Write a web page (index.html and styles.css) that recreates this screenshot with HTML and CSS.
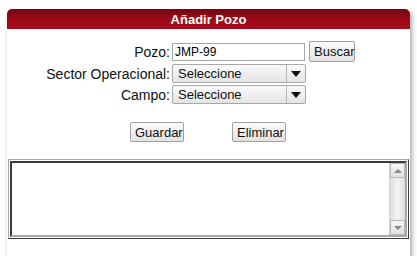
FILE: index.html
```html
<!DOCTYPE html>
<html lang="es">
<head>
    <title>Añadir Pozo</title>
    <meta charset="UTF-8">
    <link rel="stylesheet" href="styles.css">
</head>
<body>
    <div class="panel">
        <div class="panel-head">Añadir Pozo</div>
        <div class="panel-body">
            <div class="form-grid">
                <label class="lbl">Pozo:</label>
                <div class="field">
                    <input class="txt" type="text" value="JMP-99">
                    <button class="btn btn-buscar">Buscar</button>
                </div>
                <label class="lbl">Sector Operacional:</label>
                <div class="field">
                    <div class="sel"><span class="sel-text">Seleccione</span><span class="sel-arrow"></span></div>
                </div>
                <label class="lbl">Campo:</label>
                <div class="field">
                    <div class="sel"><span class="sel-text">Seleccione</span><span class="sel-arrow"></span></div>
                </div>
            </div>
            <div class="actions">
                <button class="btn">Guardar</button>
                <button class="btn">Eliminar</button>
            </div>
            <div class="frame">
                <div class="area">
                    <div class="area-text"></div>
                    <div class="scroll">
                        <div class="sb-btn"><span class="up"></span></div>
                        <div class="sb-track"></div>
                        <div class="sb-btn"><span class="down"></span></div>
                    </div>
                </div>
            </div>
        </div>
    </div>
</body>
</html>
```

FILE: styles.css
```css
body {
    margin: 0;
    background: #ffffff;
    font-family: "Liberation Sans", Arial, sans-serif;
}

.panel {
    margin: 9px 7px 0 7px;
    width: 403px;
    box-shadow: 2px 4px 5px rgba(0, 0, 0, 0.35);
}

.panel-head {
    height: 20px;
    line-height: 21px;
    border-radius: 5px 5px 0 0;
    background: linear-gradient(#6e0812, #9e0a18 50%, #a80b1b);
    color: #ffffff;
    font-weight: bold;
    font-size: 13px;
    text-align: center;
}

.panel-body {
    background: #ffffff;
    padding: 12px 1px 17px 1px;
}

.form-grid {
    display: grid;
    grid-template-columns: 128px auto;
    column-gap: 2px;
    row-gap: 2px;
    padding-left: 34px;
    align-items: center;
}

.lbl {
    text-align: right;
    font-size: 14px;
    color: #111111;
}

.field {
    display: flex;
    align-items: center;
}

.txt {
    box-sizing: border-box;
    width: 133px;
    height: 18px;
    margin: 0;
    padding: 0 2px;
    border: 1px solid #a8a8a8;
    font-family: "Liberation Sans", Arial, sans-serif;
    font-size: 12px;
    color: #000000;
    background: #ffffff;
}

.btn {
    box-sizing: border-box;
    height: 20px;
    padding: 0 4px;
    border: 1px solid #a0a0a0;
    border-radius: 2px;
    background: linear-gradient(#fbfbfb, #e2e2e2);
    font-family: "Liberation Sans", Arial, sans-serif;
    font-size: 13px;
    color: #111111;
}

.btn-buscar {
    margin-left: 4px;
    width: 46px;
    height: 21px;
}

.sel {
    box-sizing: border-box;
    width: 134px;
    height: 19px;
    display: flex;
    border: 1px solid #a8a8a8;
    border-radius: 2px;
    background: linear-gradient(#fafafa, #e4e4e4);
    font-size: 13px;
    color: #111111;
}

.sel-text {
    flex: 1;
    padding-left: 5px;
    line-height: 17px;
    border-right: 1px solid #b8b8b8;
}

.sel-arrow {
    width: 18px;
    position: relative;
}

.sel-arrow::after {
    content: "";
    position: absolute;
    left: 4px;
    top: 6px;
    border-left: 5px solid transparent;
    border-right: 5px solid transparent;
    border-top: 6px solid #111111;
}

.actions {
    display: flex;
    justify-content: center;
    gap: 48px;
    margin-top: 18px;
    padding-right: 1px;
}

.actions .btn {
    width: 54px;
}

.frame {
    margin-top: 17px;
    height: 80px;
    box-sizing: border-box;
    border: 1px solid;
    border-color: #a8a8a8 #3c3c3c #3c3c3c #a8a8a8;
    padding: 1px;
}

.area {
    height: 100%;
    box-sizing: border-box;
    border: 2px solid;
    border-color: #3c3c3c #a8a8a8 #a8a8a8 #3c3c3c;
    display: flex;
    background: #ffffff;
}

.area-text {
    flex: 1;
}

.scroll {
    width: 15px;
    display: flex;
    flex-direction: column;
    border-left: 1px solid #d0d0d0;
    background: linear-gradient(90deg, #dcdcd8, #f4f4f2, #dcdcd8);
}

.sb-btn {
    height: 15px;
    box-sizing: border-box;
    border: 1px solid #b8b8b8;
    background: linear-gradient(#f6f6f4, #e0e0dc);
    position: relative;
}

.sb-track {
    flex: 1;
}

.up, .down {
    position: absolute;
    left: 3px;
    top: 5px;
    border-left: 4px solid transparent;
    border-right: 4px solid transparent;
}

.up {
    border-bottom: 4px solid #8a8a8a;
}

.down {
    border-top: 4px solid #8a8a8a;
}
```
